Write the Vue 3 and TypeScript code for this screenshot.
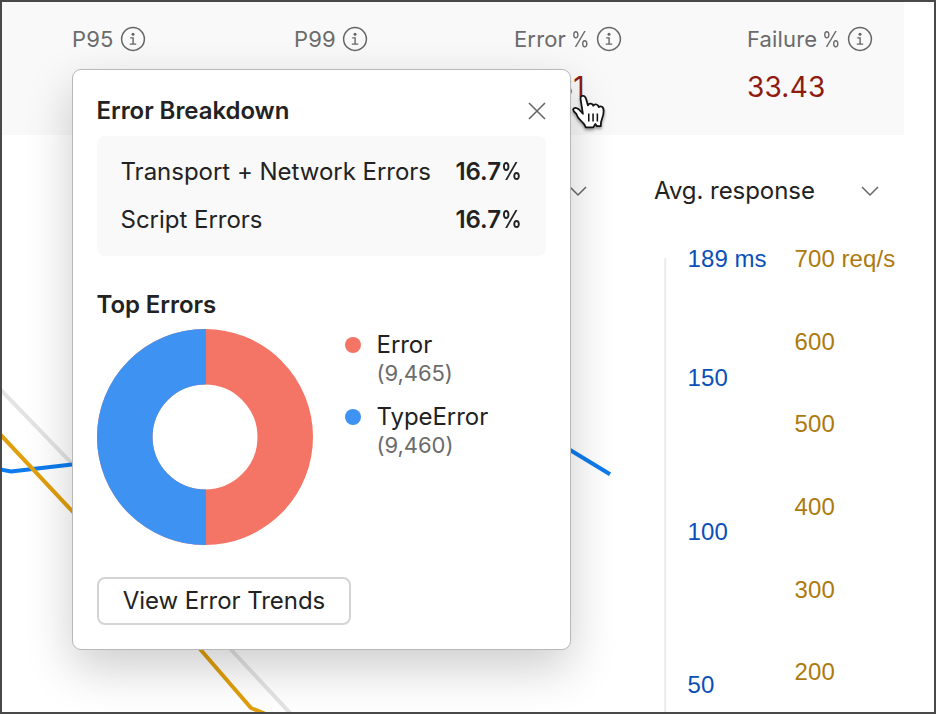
<script setup lang="ts">
interface Metric {
  key: string
  label: string
  percent?: boolean
  value: string
}

interface Tick {
  label: string
  y: number
}

const metrics: Metric[] = [
  { key: 'p95', label: 'P95', value: '' },
  { key: 'p99', label: 'P99', value: '' },
  { key: 'error', label: 'Error', percent: true, value: '33.31' },
  { key: 'failure', label: 'Failure', percent: true, value: '33.43' },
]

const breakdown = [
  { label: 'Transport + Network Errors', share: '16.7' },
  { label: 'Script Errors', share: '16.7' },
]

const topErrors = [
  { name: 'Error', count: '(9,465)', tone: 'coral' },
  { name: 'TypeError', count: '(9,460)', tone: 'blue' },
]

const responseTicks: Tick[] = [
  { label: '189 ms', y: 267 },
  { label: '150', y: 386 },
  { label: '100', y: 540 },
  { label: '50', y: 693 },
]

const rateTicks: Tick[] = [
  { label: '700 req/s', y: 267 },
  { label: '600', y: 350 },
  { label: '500', y: 432 },
  { label: '400', y: 515 },
  { label: '300', y: 598 },
  { label: '200', y: 680 },
]
</script>

<template>
  <main class="page">
    <header class="metrics">
      <section v-for="m in metrics" :key="m.key" class="metric" :class="m.key">
        <div class="metric-label">
          <span>{{ m.label }}<template v-if="m.percent">&nbsp;<span class="pct">%</span></template></span>
          <svg class="info" width="26" height="26" viewBox="0 0 26 26" fill="none">
            <circle cx="13" cy="13" r="11.4" stroke="#666" stroke-width="1.5" />
            <circle cx="13" cy="8.2" r="1.5" fill="#666" />
            <path d="M10.2 11.9h2.9v6M9.8 18.1h6.4" stroke="#666" stroke-width="1.4" />
          </svg>
        </div>
        <div class="metric-value">{{ m.value }}</div>
      </section>
    </header>

    <div class="selectors">
      <svg class="chevron" width="20" height="12" viewBox="0 0 20 12" fill="none">
        <path d="M2 2l8 8 8-8" stroke="#666" stroke-width="1.5" />
      </svg>
      <span class="selector-text">Avg. response</span>
      <svg class="chevron" width="20" height="12" viewBox="0 0 20 12" fill="none">
        <path d="M2 2l8 8 8-8" stroke="#666" stroke-width="1.5" />
      </svg>
    </div>

    <svg class="chart" width="932" height="465" viewBox="2 247 932 465" fill="none">
      <path d="M665.2 258V712" stroke="#ececec" stroke-width="2" />
      <path d="M-2 387L72 463.5L230 648.5L291 714" stroke="#e3e3e3" stroke-width="4" />
      <path d="M-2 469L11 471.5L72 464.5M566 447.5L610 474.3" stroke="#0d7bee" stroke-width="4" stroke-linejoin="round" />
      <path d="M-2 432L73 512L200 649L251 708L268 715" stroke="#e09f0b" stroke-width="4" stroke-linejoin="round" />
      <g class="ticks response">
        <text v-for="t in responseTicks" :key="t.label" x="687.6" :y="t.y">{{ t.label }}</text>
      </g>
      <g class="ticks rate">
        <text v-for="t in rateTicks" :key="t.label" x="794.6" :y="t.y">{{ t.label }}</text>
      </g>
    </svg>

    <aside class="popover">
      <div class="popover-head">
        <h2>Error Breakdown</h2>
        <svg class="close" width="18" height="18" viewBox="0 0 18 18" fill="none">
          <path d="M1 1l16 16M17 1L1 17" stroke="#666" stroke-width="1.6" />
        </svg>
      </div>
      <div class="shares">
        <div v-for="b in breakdown" :key="b.label" class="share-row">
          <span class="share-name">{{ b.label }}</span>
          <strong>{{ b.share }}<span class="pct">%</span></strong>
        </div>
      </div>
      <h2 class="top-title">Top Errors</h2>
      <div class="top">
        <svg width="216" height="216" viewBox="0 0 216 216">
          <circle cx="108" cy="108" r="80.25" fill="none" stroke="#f47565" stroke-width="55.5" />
          <path d="M109 0H108A108 108 0 0 0 108 216H109V160.5H108A52.5 52.5 0 0 1 108 55.5H109Z" fill="#3e92f2" />
        </svg>
        <ul class="legend">
          <li v-for="e in topErrors" :key="e.name">
            <i class="dot" :class="e.tone"></i>
            <div>
              <div class="legend-name">{{ e.name }}</div>
              <div class="legend-count">{{ e.count }}</div>
            </div>
          </li>
        </ul>
      </div>
      <button class="trends" type="button">View Error Trends</button>
    </aside>

    <svg class="pointer" width="41" height="42" viewBox="0 0 40 42" preserveAspectRatio="none">
      <path
        d="M12.6 22.8L10.5 9.2Q9.6 5.3 12.2 4.8Q14.7 4.4 15.7 8L17.5 14.4Q18.2 12.5 20.2 12.7Q22.2 12.9 22.7 14.8Q23.8 12.9 25.9 13.5Q27.8 14.1 28 16.2Q29.4 14.8 31.2 15.8Q33 17 32.8 20.5Q32.7 24.5 31.3 27.5Q30 30.5 30 35.2H26.3L24.8 33L22.6 36.4H15.3Q14.3 32.7 10.8 29.8Q7.4 27 6.1 22.7Q3.2 20.5 3 18.4Q4.6 15.4 8.5 18.3Z"
        fill="#fff"
        stroke="#111"
        stroke-width="1.7"
        stroke-linejoin="round"
      />
      <path d="M18.3 22.5v8M22.5 22.5v8M26.7 22.5v8" stroke="#111" stroke-width="1.5" />
    </svg>
  </main>
</template>

<style>
body {
  margin: 0;
  background: #fff;
}
</style>

<style scoped>
.page {
  position: relative;
  box-sizing: border-box;
  width: 936px;
  height: 714px;
  overflow: hidden;
  border: 2px solid #4a4949;
  background: #fff;
  color: #222;
  font-family: Inter, "Liberation Sans", sans-serif;
  font-size: 24px;
  letter-spacing: -0.05px;
}

.metrics {
  display: grid;
  grid-template-columns: 222px 220px 233px 1fr;
  box-sizing: border-box;
  width: 902px;
  height: 133px;
  padding: 21px 0 0 70px;
  background: #f9f9f9;
}

.metric-label {
  display: flex;
  align-items: center;
  gap: 6.5px;
  height: 32px;
  color: #6b6b6b;
  font-size: 22px;
  line-height: 32px;
  letter-spacing: 0.15px;
  white-space: nowrap;
}

.pct {
  display: inline-block;
  transform: scaleX(0.86);
  transform-origin: left;
}

.metric-label .pct {
  margin-right: -3px;
  margin-left: -1.8px;
}

.metric-value {
  margin-top: 12px;
  color: #8f1a10;
  font-size: 28px;
  line-height: 40px;
  letter-spacing: 0.2px;
}

.selectors {
  display: flex;
  align-items: center;
  height: 112px;
  padding-left: 566px;
}

.selector-text {
  width: 206px;
  margin-top: -2px;
  margin-left: 66px;
  white-space: nowrap;
}

.chart {
  display: block;
  overflow: visible;
}

.ticks {
  font-family: "Liberation Sans", Arial, sans-serif;
  font-size: 24px;
  letter-spacing: 0.06px;
}

.response {
  fill: #0a50b8;
}

.rate {
  fill: #ad7a0e;
}

.popover {
  position: absolute;
  top: 67px;
  left: 70px;
  box-sizing: border-box;
  width: 499px;
  height: 581px;
  padding: 24px;
  border: 1px solid #b8b8b8;
  border-radius: 9px;
  background: #fff;
  box-shadow: 0 18px 48px rgba(0, 0, 0, 0.2);
}

.popover-head {
  display: flex;
  align-items: center;
  justify-content: space-between;
  height: 34px;
}

h2 {
  margin: 0;
  font-size: 24px;
  font-weight: 600;
  line-height: 32px;
  letter-spacing: -0.06px;
  text-indent: -0.5px;
}

.shares {
  box-sizing: border-box;
  height: 120px;
  margin-top: 8px;
  padding: 12px 24px;
  border-radius: 8px;
  background: #f9f9f9;
}

.share-row {
  display: flex;
  justify-content: space-between;
  height: 48px;
  line-height: 48px;
  white-space: nowrap;
}

.share-name {
  letter-spacing: -0.02px;
  text-indent: -0.5px;
}

strong {
  font-weight: 600;
}

strong .pct {
  margin-right: -3px;
}

.top-title {
  margin-top: 33px;
}

.top {
  display: flex;
  height: 216px;
  margin-top: 8px;
}

.legend {
  margin: 0 0 0 32px;
  padding: 0;
  list-style: none;
}

.legend li {
  display: flex;
  gap: 15.5px;
  height: 72px;
}

.dot {
  width: 16px;
  height: 16px;
  margin-top: 8px;
  border-radius: 50%;
}

.coral {
  background: #f47565;
}

.blue {
  background: #3e92f2;
}

.legend-name {
  line-height: 31px;
}

.legend-count {
  color: #6b6b6b;
  font-size: 22px;
  line-height: 26px;
}

.trends {
  display: block;
  box-sizing: border-box;
  width: 254px;
  height: 48px;
  margin-top: 32px;
  padding: 0;
  border: 2px solid #d4d4d4;
  border-radius: 8px;
  background: #fff;
  color: #222;
  font: inherit;
  letter-spacing: inherit;
  line-height: 42px;
}

.pointer {
  position: absolute;
  top: 89px;
  left: 568px;
  filter: drop-shadow(0 2px 1.5px rgba(0, 0, 0, 0.4));
}
</style>
